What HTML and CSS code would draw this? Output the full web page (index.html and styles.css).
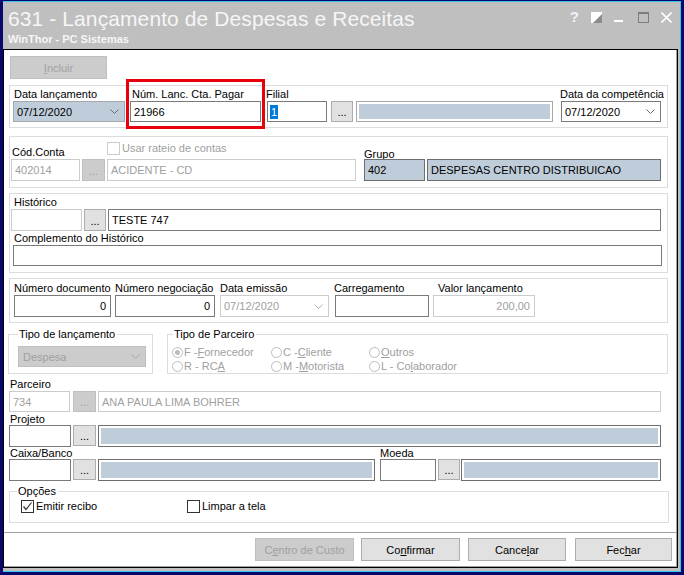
FILE: index.html
```html
<!DOCTYPE html>
<html lang="pt">
<head>
<meta charset="utf-8">
<title>631 - Lançamento de Despesas e Receitas</title>
<link rel="stylesheet" href="styles.css">
</head>
<body>
<div class="screen">
  <div class="win">
    <div class="titlebar">
      <div class="titles">
        <div class="title">631 - Lançamento de Despesas e Receitas</div>
        <div class="subtitle">WinThor - PC Sistemas</div>
      </div>
      <div class="tbtns">
        <span class="tb tb-help">?</span>
        <svg class="tb tb-skin" width="11" height="11" viewBox="0 0 11 11"><rect x="0" y="0" width="11" height="11" fill="#ffffff"/><polygon points="11,2 11,11 2,11" fill="#8c8c8c"/></svg>
        <svg class="tb tb-min" width="9" height="11" viewBox="0 0 9 11"><rect x="0" y="8" width="9" height="2" fill="#ffffff"/></svg>
        <svg class="tb tb-max" width="11" height="11" viewBox="0 0 11 11"><rect x="0.5" y="0.5" width="10" height="10" fill="none" stroke="#7d7d7d"/><rect x="0" y="0" width="11" height="2" fill="#7d7d7d"/></svg>
        <svg class="tb tb-close" width="11" height="11" viewBox="0 0 11 11"><path d="M0.5 0.5 L10.5 10.5 M10.5 0.5 L0.5 10.5" stroke="#ffffff" stroke-width="1.6"/></svg>
      </div>
    </div>

    <div class="client">
      <div class="main">
        <div class="btn dis btn-incluir"><span><u>I</u>ncluir</span></div>

        <!-- Grupo 1 -->
        <div class="grp grp1">
          <div class="col c-dlanc">
            <div class="lbl">Data lançamento</div>
            <div class="fld sel blue-sel w-dlanc">07/12/2020<svg class="chev" width="9" height="5" viewBox="0 0 9 5"><polyline points="0.5,0.5 4.5,4.5 8.5,0.5" fill="none" stroke="#6b6b6b"/></svg></div>
          </div>
          <div class="col c-num">
            <div class="lbl lbl-num">Núm. Lanc. Cta. Pagar</div>
            <div class="fld w-num">21966</div>
            <div class="mark"></div>
          </div>
          <div class="col c-filial">
            <div class="lbl lbl-filial">Filial</div>
            <div class="row">
              <div class="fld w-filial"><span class="selected">1</span></div>
              <div class="dots w-dots22 gap4">...</div>
              <div class="fld bluebox w-filnome"><div class="bfill"></div></div>
            </div>
          </div>
          <div class="col c-dcomp">
            <div class="lbl lbl-dcomp">Data da competência</div>
            <div class="fld sel w-dcomp">07/12/2020<svg class="chev" width="9" height="5" viewBox="0 0 9 5"><polyline points="0.5,0.5 4.5,4.5 8.5,0.5" fill="none" stroke="#6b6b6b"/></svg></div>
          </div>
        </div>

        <!-- Grupo 2 -->
        <div class="grp grp2">
          <div class="g2-top">
            <div class="lbl lbl-cod">Cód.Conta</div>
            <div class="chk-item dis chk-rateio"><span class="chk"></span>Usar rateio de contas</div>
            <div class="lbl lbl-grupo">Grupo</div>
          </div>
          <div class="row">
            <div class="fld dis w-cod">402014</div>
            <div class="dots dis w-dots23 gap2">...</div>
            <div class="fld dis w-acid gap2">ACIDENTE - CD</div>
            <div class="fld blue w-grp">402</div>
            <div class="fld blue w-grpnome gap2">DESPESAS CENTRO DISTRIBUICAO</div>
          </div>
        </div>

        <!-- Grupo 3 -->
        <div class="grp grp3">
          <div class="lbl lbl-hist">Histórico</div>
          <div class="row">
            <div class="fld w-hist"></div>
            <div class="dots w-dots22 gap2">...</div>
            <div class="fld w-histtxt gap2">TESTE 747</div>
          </div>
          <div class="lbl lbl-compl">Complemento do Histórico</div>
          <div class="fld w-compl"></div>
        </div>

        <!-- Grupo 4 -->
        <div class="grp grp4">
          <div class="col c-ndoc">
            <div class="lbl">Número documento</div>
            <div class="fld num w-ndoc">0</div>
          </div>
          <div class="col c-nneg">
            <div class="lbl">Número negociação</div>
            <div class="fld num w-nneg">0</div>
          </div>
          <div class="col c-demis">
            <div class="lbl">Data emissão</div>
            <div class="fld sel dis w-demis">07/12/2020<svg class="chev" width="9" height="5" viewBox="0 0 9 5"><polyline points="0.5,0.5 4.5,4.5 8.5,0.5" fill="none" stroke="#b4b4b4"/></svg></div>
          </div>
          <div class="col c-carr">
            <div class="lbl lbl-carr">Carregamento</div>
            <div class="fld w-carr"></div>
          </div>
          <div class="col c-valor">
            <div class="lbl lbl-valor">Valor lançamento</div>
            <div class="fld num dis w-valor">200,00</div>
          </div>
        </div>

        <!-- Tipos -->
        <div class="tipos">
          <fieldset class="fs fs-tipo">
            <legend>Tipo de lançamento</legend>
            <div class="fld sel gray-sel w-tipo">Despesa<svg class="chev" width="9" height="5" viewBox="0 0 9 5"><polyline points="0.5,0.5 4.5,4.5 8.5,0.5" fill="none" stroke="#a8a8a8"/></svg></div>
          </fieldset>
          <fieldset class="fs fs-parc">
            <legend>Tipo de Parceiro</legend>
            <div class="radios">
              <div class="rcol rc1">
                <div class="radio on"><span class="rdot"></span>F - <u>F</u>ornecedor</div>
                <div class="radio"><span class="rdot"></span>R - RC<u>A</u></div>
              </div>
              <div class="rcol rc2">
                <div class="radio"><span class="rdot"></span>C - <u>C</u>liente</div>
                <div class="radio"><span class="rdot"></span>M - <u>M</u>otorista</div>
              </div>
              <div class="rcol rc3">
                <div class="radio"><span class="rdot"></span><u>O</u>utros</div>
                <div class="radio"><span class="rdot"></span>L - Co<u>l</u>aborador</div>
              </div>
            </div>
          </fieldset>
        </div>

        <!-- Parceiro -->
        <div class="blk blk-parc">
          <div class="lbl lbl-left">Parceiro</div>
          <div class="row">
            <div class="fld dis w-pcod">734</div>
            <div class="dots dis w-dots23 gap3">...</div>
            <div class="fld dis w-pnome gap2">ANA PAULA LIMA BOHRER</div>
          </div>
        </div>

        <div class="blk blk-proj">
          <div class="lbl lbl-left">Projeto</div>
          <div class="row">
            <div class="fld h22 w-prcod"></div>
            <div class="dots h22 w-dots23 gap2">...</div>
            <div class="fld h22 bluebox dark w-prnome gap2"><div class="bfill"></div></div>
          </div>
        </div>

        <div class="blk blk-caixa">
          <div class="lbl-row">
            <div class="lbl lbl-left lbl-caixa">Caixa/Banco</div>
            <div class="lbl lbl-moeda">Moeda</div>
          </div>
          <div class="row">
            <div class="fld h22 w-prcod"></div>
            <div class="dots h22 w-dots23 gap2">...</div>
            <div class="fld h22 bluebox dark w-cxnome gap2"><div class="bfill"></div></div>
            <div class="fld h22 w-moeda"></div>
            <div class="dots h22 w-dots22 gap2">...</div>
            <div class="fld h22 bluebox dark w-mnome gap1"><div class="bfill"></div></div>
          </div>
        </div>

        <fieldset class="fs fs-opcoes">
          <legend>Opções</legend>
          <div class="opts">
            <div class="chk-item opt1"><span class="chk checked"><svg width="11" height="11" viewBox="0 0 11 11"><polyline points="1.5,5.5 4,8.5 9.5,1.5" fill="none" stroke="#333333" stroke-width="1.2"/></svg></span>Emitir recibo</div>
            <div class="chk-item opt2"><span class="chk dark"></span>Limpar a tela</div>
          </div>
        </fieldset>
      </div>

      <div class="footer">
        <div class="btn dis b-centro"><span>C<u>e</u>ntro de Custo</span></div>
        <div class="btn b-conf"><span>Co<u>n</u>firmar</span></div>
        <div class="btn b-canc"><span>Cance<u>l</u>ar</span></div>
        <div class="btn b-fech"><span>Fec<u>h</u>ar</span></div>
      </div>
    </div>
  </div>
</div>
</body>
</html>
```

FILE: styles.css
```css
* { box-sizing: border-box; margin: 0; padding: 0; }
html, body { width: 684px; height: 575px; overflow: hidden; }
body {
  background: #07076c;
  font-family: "Liberation Sans", Arial, sans-serif;
  font-size: 11px;
  color: #000;
}
u { text-decoration: underline; text-underline-offset: 1px; }

.screen { padding: 1px 0 0 3px; }
.win {
  width: 678px;
  height: 571px;
  background: #bfbfbf;
  border-top: 1px solid #38c4ea;
  border-right: 1px solid #38c4ea;
  border-bottom: 1px solid #38c4ea;
  padding: 0 2px 3px 0;
  display: flex;
  flex-direction: column;
}

/* title bar */
.titlebar {
  height: 47px;
  display: flex;
  justify-content: space-between;
  padding: 5px 0 0 5px;
  color: #f6f6f6;
}
.title { font-size: 21px; line-height: 24px; white-space: nowrap; letter-spacing: 0.1px; }
.subtitle { font-size: 11px; font-weight: bold; line-height: 13px; margin-top: 2px; }
.tbtns { display: flex; align-items: flex-start; padding-top: 5px; padding-right: 6px; }
.tb { display: block; }
.tb-help { font-size: 15px; line-height: 14px; font-weight: bold; color: #eef3f8; margin-right: 12px; margin-top: -2px; }
.tb-skin { margin-right: 12px; }
.tb-min { margin-right: 15px; }
.tb-max { margin-right: 12px; }

/* client */
.client {
  width: 675px;
  height: 519px;
  background: #fff;
  border: 1px solid #000;
  box-shadow: inset -1px -1px 0 #a0a0a0;
  display: flex;
  flex-direction: column;
}
.main { height: 482px; padding-top: 6px; }
.footer {
  height: 35px;
  border-top: 1px solid #a0a0a0;
  display: flex;
  justify-content: flex-end;
  align-items: flex-start;
  padding: 5px 5px 0 0;
}

/* common controls */
.row { display: flex; align-items: flex-start; }
.col { display: flex; flex-direction: column; }
.lbl { line-height: 13px; height: 13px; white-space: nowrap; }
.fld {
  height: 21px;
  border: 1px solid #7a7a7a;
  background: #fff;
  display: flex;
  align-items: center;
  padding: 0 3px;
  white-space: nowrap;
  overflow: hidden;
  flex: none;
}
.h22 { height: 22px; }
.fld.dis { border-color: #cccccc; color: #a0a0a0; }
.fld.num { justify-content: flex-end; padding-right: 4px; }
.fld.sel { justify-content: space-between; padding-right: 5px; }
.fld.blue { background: #bfcddb; border-color: #6e6e6e; }
.fld.blue-sel { background: #bfcddb; border-color: #a7a7a7; }
.fld.gray-sel { background: #cccccc; border-color: #bfbfbf; color: #a0a0a0; }
.fld.bluebox { padding: 2px; border-color: #a7a7a7; }
.fld.bluebox.dark { border-color: #6e6e6e; }
.bfill { width: 100%; height: 100%; background: #bfcddb; }
.chev { display: block; flex: none; }
.selected { background: #0078d7; color: #fff; padding: 0 1px; line-height: 14px; }

.dots {
  height: 21px;
  border: 1px solid #adadad;
  background: #e1e1e1;
  display: flex;
  justify-content: center;
  align-items: flex-end;
  line-height: 15px;
  padding-bottom: 1px;
  flex: none;
}
.dots.dis { background: #cccccc; border-color: #bfbfbf; color: #a0a0a0; }

.btn {
  height: 23px;
  border: 1px solid #adadad;
  background: #e1e1e1;
  display: flex;
  justify-content: center;
  align-items: center;
  font-size: 11px;
  flex: none;
}
.btn.dis { background: #cccccc; border-color: #bfbfbf; color: #a0a0a0; }

/* gaps */
.gap1 { margin-left: 1px; }
.gap2 { margin-left: 2px; }
.gap3 { margin-left: 3px; }
.gap4 { margin-left: 4px; }

.grp { border: 1px solid #dcdcdc; width: 659px; margin-left: 5px; }

/* Incluir */
.btn-incluir { width: 97px; margin-left: 6px; }

/* Group 1 */
.grp1 { margin-top: 6px; height: 43px; display: flex; padding-top: 2px; }
.c-dlanc { margin-left: 3px; }
.c-dlanc .lbl { padding-left: 1px; }
.w-dlanc { width: 112px; }
.c-num { margin-left: 5px; position: relative; }
.lbl-num { padding-left: 2px; }
.w-num { width: 131px; }
.mark {
  position: absolute;
  left: -4px;
  top: -9px;
  width: 139px;
  height: 50px;
  border: 3px solid #e8000d;
}
.c-filial { margin-left: 6px; }
.lbl-filial { margin-left: -1px; }
.w-filial { width: 60px; padding-left: 2px; }
.w-dots22 { width: 22px; }
.w-dots23 { width: 23px; }
.w-filnome { width: 197px; margin-left: 3px; }
.c-dcomp { margin-left: 8px; }
.lbl-dcomp { margin-left: -1px; }
.w-dcomp { width: 100px; }

/* Group 2 */
.grp2 { margin-top: 8px; height: 52px; }
.g2-top { height: 22px; display: flex; align-items: flex-end; }
.lbl-cod { width: 97px; padding-left: 2px; }
.chk-rateio { margin-bottom: 4px; width: 257px; }
.lbl-grupo { margin-bottom: -2px; }
.grp2 .row { padding-left: 1px; }
.w-cod { width: 69px; }
.w-acid { width: 249px; }
.w-grp { width: 61px; margin-left: 8px; }
.w-grpnome { width: 234px; }
.grp2 .row .fld, .grp2 .row .dots { height: 22px; }

/* Group 3 */
.grp3 { margin-top: 5px; height: 80px; padding-top: 2px; }
.lbl-hist { padding-left: 4px; }
.grp3 .row { padding-left: 1px; }
.grp3 .row .fld, .grp3 .row .dots { height: 22px; }
.w-hist { width: 71px; border-color: #cccccc; }
.w-histtxt { width: 553px; }
.lbl-compl { padding-left: 4px; margin-top: 1px; }
.w-compl { width: 649px; margin-left: 3px; }

/* Group 4 */
.grp4 { margin-top: 5px; height: 45px; display: flex; padding-top: 3px; }
.grp4 .fld { height: 22px; }
.c-ndoc { margin-left: 4px; }
.w-ndoc { width: 97px; }
.c-nneg { margin-left: 4px; }
.w-nneg { width: 100px; }
.c-demis { margin-left: 5px; }
.w-demis { width: 109px; }
.c-carr { margin-left: 6px; }
.lbl-carr { margin-left: -1px; }
.w-carr { width: 94px; }
.c-valor { margin-left: 4px; }
.lbl-valor { padding-left: 5px; }
.w-valor { width: 102px; }

/* fieldsets */
.fs {
  border: 1px solid #dcdcdc;
  min-width: 0;
}
.fs legend { line-height: 13px; padding: 0 2px 0 1px; }
.tipos { display: flex; margin-top: 5px; margin-left: 4px; }
.fs-tipo { width: 145px; height: 46px; padding: 5px 0 0 9px; }
.fs-tipo legend { margin-left: 0; }
.w-tipo { width: 128px; height: 21px; padding-left: 4px; }
.fs-parc { width: 501px; height: 46px; margin-left: 14px; padding: 4px 0 0 4px; }
.fs-parc legend { margin-left: 1px; }
.radios { display: flex; color: #a0a0a0; }
.rcol { display: flex; flex-direction: column; }
.rc1 { width: 99px; }
.rc2 { width: 98px; }
.radio { display: flex; align-items: center; height: 14px; line-height: 14px; white-space: nowrap; }
.rdot {
  width: 11px;
  height: 11px;
  border: 1px solid #bcbcbc;
  border-radius: 50%;
  margin-right: 1px;
  position: relative;
  flex: none;
}
.radio.on .rdot::after {
  content: "";
  position: absolute;
  left: 2px;
  top: 2px;
  width: 5px;
  height: 5px;
  border-radius: 50%;
  background: #bcbcbc;
}

/* partner rows */
.blk { margin-left: 5px; }
.lbl-left { padding-left: 1px; }
.blk-parc { margin-top: 4px; }
.w-pcod { width: 61px; }
.w-pnome { width: 563px; }
.blk-proj .lbl { height: 12px; line-height: 12px; margin-top: 1px; }
.w-prcod { width: 62px; }
.w-prnome { width: 563px; }
.lbl-row { display: flex; }
.blk-caixa .lbl { height: 12px; line-height: 12px; }
.lbl-caixa { width: 371px; }
.w-cxnome { width: 277px; }
.w-moeda { width: 56px; margin-left: 5px; }
.w-mnome { width: 200px; }

/* opções */
.fs-opcoes { width: 660px; height: 38px; margin: 4px 0 0 5px; padding: 2px 0 0 11px; }
.fs-opcoes legend { margin-left: -4px; }
.opts { display: flex; }
.chk-item { display: flex; align-items: center; line-height: 13px; white-space: nowrap; }
.chk {
  width: 13px;
  height: 13px;
  border: 1px solid #333333;
  background: #fff;
  margin-right: 2px;
  display: flex;
  align-items: center;
  justify-content: center;
  flex: none;
}
.chk-item.dis { color: #a0a0a0; }
.chk-item.dis .chk { border-color: #cccccc; }
.opt1 { width: 166px; }

/* footer buttons */
.b-centro { width: 99px; }
.b-conf { width: 99px; margin-left: 7px; }
.b-canc { width: 98px; margin-left: 8px; }
.b-fech { width: 97px; margin-left: 9px; }
```
